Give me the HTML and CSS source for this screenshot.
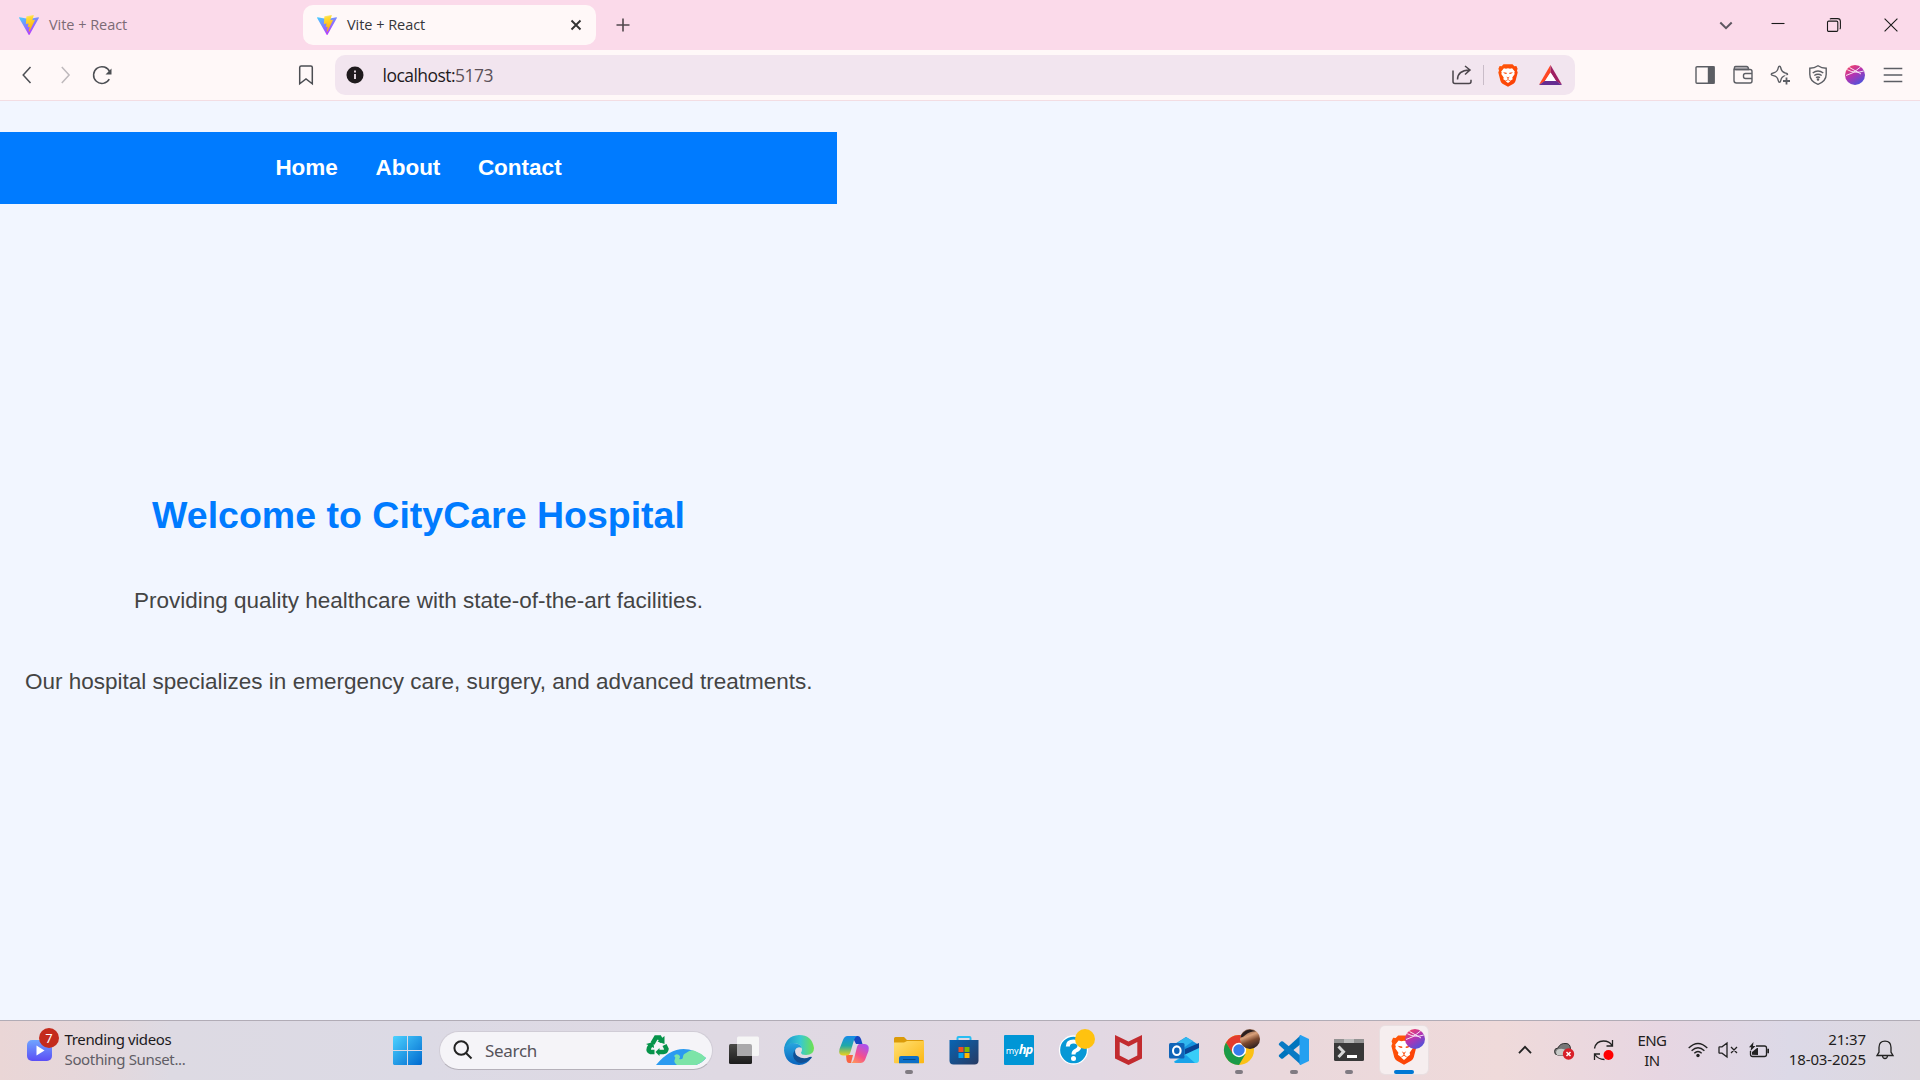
FILE: index.html
```html
<!DOCTYPE html>
<html lang="en">
<head>
<meta charset="utf-8">
<title>Vite + React</title>
<link rel="stylesheet" href="styles.css">
</head>
<body>
<svg class="sprite" aria-hidden="true">
  <defs>
    <linearGradient id="viteBody" x1="0" y1="0" x2=".6" y2="1"><stop offset="0" stop-color="#41d1ff"/><stop offset="1" stop-color="#bd34fe"/></linearGradient>
    <linearGradient id="viteBolt" x1=".4" y1="0" x2=".55" y2="1"><stop offset="0" stop-color="#ffea83"/><stop offset=".15" stop-color="#ffdd35"/><stop offset="1" stop-color="#ffa800"/></linearGradient>
    <linearGradient id="orb" x1=".15" y1="0" x2=".8" y2="1"><stop offset="0" stop-color="#f6425f"/><stop offset=".45" stop-color="#b633b0"/><stop offset="1" stop-color="#4256e0"/></linearGradient>
    <linearGradient id="braveFill" x1="0" y1="0" x2="1" y2="1"><stop offset="0" stop-color="#ff5a0a"/><stop offset="1" stop-color="#fb3b05"/></linearGradient>
    <symbol id="vite" viewBox="0 0 256 257">
      <path fill="url(#viteBody)" d="M255.153 37.938L134.897 252.976c-2.483 4.44-8.862 4.466-11.382.048L.875 37.958c-2.746-4.814 1.371-10.646 6.827-9.67l120.385 21.517a6.537 6.537 0 0 0 2.322-.004l117.867-21.483c5.438-.991 9.574 4.796 6.877 9.62Z"/>
      <path fill="url(#viteBolt)" d="M185.432.063L96.44 17.501a3.268 3.268 0 0 0-2.634 3.014l-5.474 92.456a3.268 3.268 0 0 0 3.997 3.378l24.777-5.718c2.318-.535 4.413 1.507 3.936 3.838l-7.361 36.047c-.495 2.426 1.782 4.5 4.151 3.78l15.304-4.649c2.372-.72 4.652 1.36 4.15 3.788l-11.698 56.621c-.732 3.542 3.979 5.473 5.943 2.437l1.313-2.028l72.516-144.72c1.215-2.423-.88-5.186-3.54-4.672l-25.505 4.922c-2.396.462-4.435-1.77-3.759-4.114l16.646-57.705c.677-2.35-1.37-4.583-3.769-4.113Z"/>
    </symbol>
    <symbol id="brave" viewBox="0 0 20 23">
      <path fill="url(#braveFill)" d="M5.5.3h9l1.9 2 2-.3 1.200 2.800-.6 1.700.7 2-2.200 8.600q-.5 1.700-2 2.700L10 22.800l-5.500-3q-1.500-1-2-2.700L.3 8.500l.7-2L.4 4.800 1.600 2l2 .3z"/>
      <path fill="#fff" d="M5.900 4.200 8 4.700l2-.4 2 .4 2.100-.5 2.700 3.300-.5 1.300.4 1.300-2.400 3.500.4 1.600-2.400 1.600-1.100-.8L10 15.200l-1.200.8-1.100.8-2.400-1.600.4-1.600L3.300 10.100l.4-1.300-.5-1.300z"/>
      <path fill="#fff" d="M10 15.900 12.300 17.300 10 19.100 7.700 17.300z"/>
      <path fill="#fb4a0b" d="M5 8.300 8.600 8.800 8.700 10 6.900 9.800zM15 8.300 11.400 8.800 11.300 10 13.100 9.800zM8.300 12.400 10 13.600 11.700 12.400 10.500 14.300v.9h-1v-.9z"/>
    </symbol>
    <symbol id="planet" viewBox="0 0 20 20">
      <circle cx="10" cy="10" r="10" fill="url(#orb)"/>
      <path fill="none" stroke="#fff" stroke-opacity=".85" stroke-width="1" d="M2.300 4.700Q10 9 18.800 6M1 10.500Q9 8.500 15.500 2M4.500 2.500 16 9"/>
    </symbol>
  </defs>
</svg>

<header class="browser">
  <div class="tabstrip">
    <div class="tab"><svg class="favicon"><use href="#vite"/></svg><span>Vite + React</span></div>
    <div class="tab tab-active"><svg class="favicon"><use href="#vite"/></svg><span>Vite + React</span>
      <svg class="tab-close" viewBox="0 0 12 12"><path d="M1.500 1.500l9 9M10.500 1.500l-9 9"/></svg></div>
    <svg class="new-tab" viewBox="0 0 14 14"><path d="M7 .5v13M.5 7h13"/></svg>
    <div class="window-controls">
      <svg class="win chevron" viewBox="0 0 14 14"><path d="M1.300 4.500 7 10.200l5.700-5.700"/></svg>
      <svg class="win" viewBox="0 0 14 14"><path d="M.5 5.500h13"/></svg>
      <svg class="win" viewBox="0 0 14 14"><rect x=".5" y="3.100" width="10.300" height="10.300" rx="1.200"/><path d="M3 1.200Q3.300.6 4.200.6h6.400q2.800 0 2.800 2.800v6.400q0 1-.7 1.300"/></svg>
      <svg class="win" viewBox="0 0 14 14"><path d="M.6.6l12.800 12.800M13.400.6.6 13.400"/></svg>
    </div>
  </div>
  <div class="toolbar">
    <div class="nav-buttons">
      <svg viewBox="0 0 20 20"><path d="M13.500 2 6.200 10l7.300 8"/></svg>
      <svg class="dim" viewBox="0 0 20 20"><path d="M6.800 2l7.300 8-7.300 8"/></svg>
      <svg viewBox="0 0 20 20"><path d="M17.300 14.200A8.400 8.400 0 1 1 17.800 7"/><path fill="#4c4e53" stroke="none" d="M19.500 3.500v6h-6z"/></svg>
    </div>
    <svg class="bookmark" viewBox="0 0 20 20"><path d="M3.700 2.500q0-1.500 1.500-1.500h9.600q1.500 0 1.500 1.500v16.300L10 14l-6.300 4.800z"/></svg>
    <div class="address">
      <svg class="info" viewBox="0 0 18 18"><circle cx="9" cy="9" r="8.500" fill="#1f1a1d"/><path stroke="#f2e5ef" stroke-width="1.800" d="M9 8v5M9 4.500v2"/></svg>
      <span class="url">localhost:<span class="port">5173</span></span>
      <div class="address-actions">
        <svg class="share" viewBox="0 0 20 20"><path d="M1 5.500v11q0 2 2 2h14q2 0 2-2v-1.800M5.500 14.500q0-9 12-9.500M13 1l5 4-5 4.500"/></svg>
        <i class="divider"></i>
        <svg class="lion"><use href="#brave"/></svg>
        <svg class="bat" viewBox="0 0 23 20"><path fill="#ff4724" d="M11.500 0v7.500L5.700 16.500 0 19.800z"/><path fill="#9e1f63" d="M11.500 0 23 19.800l-5.700-3.300-5.800-9z"/><path fill="#662d91" d="M0 20l5.700-4h11.600l5.700 4z"/><path fill="#fff" d="M11.500 7.500 17 16H6z"/></svg>
      </div>
    </div>
    <div class="extensions">
      <svg viewBox="0 0 20 20"><rect x="1" y="1.700" width="18" height="16.600" rx="1"/><path fill="#5c5e64" d="M13.500 2H19v16h-5.500z"/></svg>
      <svg viewBox="0 0 20 20"><path fill="#c9c4c8" d="M1.500 2.500q0-1 1-1h11q2 0 2 3h-14z"/><path d="M1 3.500v12q0 2.500 2.500 2.500H17q2 0 2-2V6.500q0-2-2-2H2.500M19 8.500h-6.500q-2 0-2 2v1q0 2 2 2H19"/></svg>
      <svg viewBox="0 0 20 20"><path d="M9.500 1.200Q10.500 1.200 10.800 3q.8 4 4.500 5 2.300.4 2.300 1.300t-2.300 1.300q-3.700.8-4.500 4.700-.4 2-1.300 2t-1.300-2q-.8-4-4.900-4.700-2.100-.4-2.100-1.300t2.100-1.300q4.200-1 4.900-5 .4-1.800 1.300-1.800z"/><path fill="#fff8f8" stroke="#fff8f8" d="M15.500 11h4v8h-5z"/><path stroke-width="1.800" d="M16.500 12.500v7M13 16h7"/></svg>
      <svg viewBox="0 0 20 20"><path d="M10 .8q3.500 2.500 8.200 2.500v6q0 7-8.200 10-8.200-3-8.200-10v-6Q6.500 3.300 10 .8z"/><path d="M4.700 8q5.300-4 10.600 0M6.300 10.500q3.700-2.600 7.400 0M8 12.700q2-1.300 4 0"/><circle cx="10" cy="14.500" r=".6"/></svg>
      <svg><use href="#planet"/></svg>
      <svg viewBox="0 0 20 20"><path d="M.7 3.500h18.600M.7 10h18.600M.7 16.500h18.600"/></svg>
    </div>
  </div>
</header>

<main class="page">
  <nav class="site-nav"><a>Home</a><a>About</a><a>Contact</a></nav>
  <section class="hero">
    <h1>Welcome to CityCare Hospital</h1>
    <p>Providing quality healthcare with state-of-the-art facilities.</p>
    <p>Our hospital specializes in emergency care, surgery, and advanced treatments.</p>
  </section>
</main>

<footer class="taskbar">
  <div class="widget">
    <div class="widget-icon">
      <svg viewBox="0 0 25 21"><defs><linearGradient id="vid" x1="0" y1="0" x2="0" y2="1"><stop stop-color="#6fa5ff"/><stop offset="1" stop-color="#5b4ef5"/></linearGradient></defs><rect width="25" height="21" rx="5" fill="url(#vid)"/><path fill="#fff" d="M9.500 5.500v10l8-5z"/></svg>
      <span class="count">7</span>
    </div>
    <div class="widget-text"><span class="w1">Trending videos</span><span class="w2">Soothing Sunset...</span></div>
  </div>

  <div class="start"><svg viewBox="0 0 29 29"><defs><linearGradient id="win" x1="0" y1="0" x2="1" y2="1"><stop stop-color="#4cd2ff"/><stop offset="1" stop-color="#0069cf"/></linearGradient></defs><path fill="url(#win)" d="M1 0h13v14H0V1zM15 0h13l1 1v13H15zM0 15h14v14H1l-1-1zM15 15h14v13l-1 1H15z"/></svg></div>

  <div class="search">
    <svg class="glass" viewBox="0 0 20 20"><circle cx="8.200" cy="8" r="6.800"/><path d="M13 13l5.500 5.500"/></svg>
    <span>Search</span>
    <svg class="earth" viewBox="0 0 60 34">
      <g fill="none" stroke="#06934a" stroke-width="4.500"><path d="M6.500 10.500 10 4.500h3.500L16 9M18.500 12l2 4q-.5 3-3 3H13M8.500 19H4.500q-2.500-1-1.500-4l2-3.500"/></g>
      <path fill="#06934a" d="M18.500 3v8l-7-2.500zM13.500 15v8L9.500 19zM0 11l7.500-2 .5 6z"/>
      <path fill="#2b9bf0" d="M10 32Q33 4 60 25q-4 5-10 7z"/>
      <path fill="#7ce4a8" d="M40 20q5-4 9-2 6 2 11 7-4 5-10 7H31q-4-3-2-6 1-2-1-3 2-3 5-1 2 2 0 4 4 1 4-2 0-3 3-4z"/>
    </svg>
  </div>

  <div class="apps">
    <div class="app"><svg viewBox="0 0 30 30"><defs><linearGradient id="tv" x1="0" y1="0" x2="0" y2="1"><stop stop-color="#4a4a48"/><stop offset="1" stop-color="#1c1c1c"/></linearGradient></defs><rect y="9" width="23" height="20" rx="1.500" fill="url(#tv)"/><rect x="8" y="1.500" width="22" height="19.500" rx="1.500" fill="#f6f6f6"/><path fill="#aaa9ab" d="M8 9h13q2 0 2 2v10H9.500q-1.500 0-1.500-1.500z"/></svg></div>
    <div class="app"><svg viewBox="0 0 30 30"><defs><linearGradient id="e1"><stop stop-color="#168fd0"/><stop offset=".55" stop-color="#38c9d0"/><stop offset="1" stop-color="#70e24c"/></linearGradient><linearGradient id="e2" x1="0" y1="0" x2="0" y2="1"><stop stop-color="#28a5df"/><stop offset="1" stop-color="#0863bd"/></linearGradient></defs><path fill="url(#e2)" d="M0 15Q1 7 9 8q7 0 9 5-5-2-7 2 0 9 8 10 5 0 9-3-5 8-13 8Q1 29 0 15z"/><path fill="#104f94" d="M11.500 14Q6 22 13 27q7 3 14.500-4 1-2-2-1-6 3-12-1-4-3-2-7z"/><path fill="url(#e1)" d="M0 15Q1 1 15 0q13 0 15 13 0 7-8 7-5 0-5-2.500 1-1 1-3Q17 8 9.500 8 2 8.500 0 15z"/></svg></div>
    <div class="app"><svg viewBox="0 0 30 30"><defs><linearGradient id="c1" x1="0" y1="0" x2="0" y2="1"><stop stop-color="#178bea"/><stop offset=".5" stop-color="#20a9a6"/><stop offset="1" stop-color="#efd21a"/></linearGradient><linearGradient id="c2" x1="0" y1="1" x2=".6" y2="0"><stop stop-color="#ffa055"/><stop offset=".5" stop-color="#f5508c"/><stop offset="1" stop-color="#b052e8"/></linearGradient></defs><path fill="#1747c2" d="M13 1h6q2 0 3 3l1.500 5H17z"/><path fill="#f96443" d="M7 20h7l-2 8H10q-2 0-2.500-3z"/><path fill="url(#c1)" d="M8.500 1H18q-2 1-3 4l-3.500 12q-1 3.500-4.500 3.500H4Q-1 20 .5 14L4 5q1.500-4 4.500-4z"/><path fill="url(#c2)" d="M18.500 9H26q5 1 3.500 7L26 25q-1.500 3-4.500 3H12q2-1 3-4l3-12q.5-2 2-3z"/></svg></div>
    <div class="app running"><svg viewBox="0 0 30 30"><defs><linearGradient id="fo" x1="0" y1="0" x2="1" y2="1"><stop stop-color="#ffe074"/><stop offset="1" stop-color="#fcb712"/></linearGradient></defs><path fill="#db9b09" d="M0 3.500Q0 2 1.500 2H10l3 3h15.500Q30 5 30 6.500V12H0z"/><path fill="url(#fo)" d="M0 7.500h10L13 6h17v21.500q0 .8-1 .8H1q-1 0-1-1z"/><path fill="#0d6fc7" d="M5 28.200V23q0-2 2-2h16q2 0 2 2v5.200z"/><path stroke="#074b86" stroke-width="1" d="M9 24.500h12.500"/></svg></div>
    <div class="app"><svg viewBox="0 0 30 30"><defs><linearGradient id="st" x1="0" y1="0" x2="1" y2="1"><stop stop-color="#0865b4"/><stop offset="1" stop-color="#273a63"/></linearGradient></defs><path fill="none" stroke="#29bdf2" stroke-width="2" d="M8.500 7V3q0-1 1-1h11q1 0 1 1v4"/><path fill="url(#st)" d="M.5 5h29v20.500q0 4-4 4h-21q-4 0-4-4z"/><path fill="#f25022" d="M9.500 12h5v5h-5z"/><path fill="#7fba00" d="M15.500 12h5v5h-5z"/><path fill="#00a4ef" d="M9.500 18h5v5h-5z"/><path fill="#ffb900" d="M15.500 18h5v5h-5z"/></svg></div>
    <div class="app"><div class="myhp"><span>my</span><b>hp</b></div></div>
    <div class="app"><svg viewBox="0 0 30 30"><circle cx="14.500" cy="15" r="14" fill="#0798d6" stroke="#fff" stroke-width="1.300"/><path fill="none" stroke="#fff" stroke-width="4" d="M8.800 11.500q0-5 5.700-5 6 0 6 4.500 0 3-3.500 4.500-2.500 1-2.500 4"/><circle cx="14.500" cy="23.500" r="2.500" fill="#fff"/></svg><i class="dot-badge"></i></div>
    <div class="app"><svg viewBox="0 0 30 30"><path fill="#c22b2f" d="M1 0l13.500 6.500L28 0v23.500L14.500 30 1 23.500zM5.700 7v13.500l8.800 4.500 8.800-4.500V7l-8.800 4.500z"/></svg></div>
    <div class="app"><svg viewBox="0 0 30 30"><path fill="#1694df" d="M4 10 17 2l13 8v4L14 22 4 16z"/><path fill="#32b8ef" d="M11 6l6-4 7 4-11 8-5-5z"/><path fill="#0a4494" d="M30 8v6L16 21V14z"/><path fill="#38cdf8" d="M30 13v12q0 3-3 3H8q-2 0-3-1.500L15 20z"/><path fill="#19a3e9" d="M5 27l12-7 9 8H8q-2 0-3-1z"/><rect y="8" width="15.500" height="15.500" rx="1.500" fill="#0f64b8"/><ellipse cx="7.800" cy="15.700" rx="3.800" ry="4.300" fill="none" stroke="#fff" stroke-width="2.100"/></svg></div>
    <div class="app running"><svg viewBox="0 0 30 30"><circle cx="15" cy="15" r="15" fill="#fbc116"/><path fill="#e33b2e" d="M2 7.500A15 15 0 0 1 28 7.500L27.500 9H15L8.500 19z"/><path fill="#1b9a48" d="M2 7.500A15 15 0 0 0 15 30l6.500-11H9z"/><circle cx="15" cy="15" r="7.200" fill="#fff"/><circle cx="15" cy="15" r="5.700" fill="#367cec"/></svg>
      <svg class="avatar" viewBox="0 0 20 20"><defs><linearGradient id="av" x1=".3" y1="0" x2=".7" y2="1"><stop stop-color="#6d4a38"/><stop offset=".35" stop-color="#d9a07a"/><stop offset=".6" stop-color="#7d4a30"/><stop offset="1" stop-color="#211a1e"/></linearGradient></defs><circle cx="10" cy="10" r="10" fill="url(#av)"/><path fill="#2b1f1e" d="M1.500 5.500Q7-2 16 2.300 9 2.500 6 5.500t-5.500 3z"/></svg></div>
    <div class="app running"><svg viewBox="0 0 30 30"><path fill="#0074bd" d="M22 0 0 20q-.5 1 0 1.500l2 2q1 .5 2 0L23 8z"/><path fill="#087ac4" d="M22 30 0 10q-.5-1 0-1.500l2-2q1-.5 2 0L23 22z"/><path fill="#25a0f0" d="M21.500 0 30 4v22l-8.500 4q-1 0-1-1V1q0-1 1-1z"/></svg></div>
    <div class="app running"><svg viewBox="0 0 30 30"><rect y="4" width="30" height="22" rx="1.500" fill="#383838"/><path fill="#929292" d="M1 4h9v4H0V5zM20 4h9l1 1v3H20z"/><path fill="#bbb" d="M10 4h10v4H10z"/><path fill="none" stroke="#d6d6d6" stroke-width="3" d="M4.500 11.500 9.500 16.700 4.500 22"/><path stroke="#fff" stroke-width="3" d="M13 21.500h10"/></svg></div>
    <div class="app running current"><svg class="brave-app"><use href="#brave"/></svg><svg class="avatar"><use href="#planet"/></svg></div>
  </div>

  <div class="tray">
    <svg class="t-up" viewBox="0 0 14 10"><path d="M1 8.200 7 1.800l6 6.400"/></svg>
    <svg class="t-cloud" viewBox="0 0 20 18"><path fill="#777" stroke="#333" stroke-width="1" d="M4 13Q.5 13 .5 9.500T4 6q2-5 8-4.500 4.500 0 4.500 6L12 13z"/><path fill="#c8cac8" stroke="none" d="M3 13Q1 10 3.500 7.500q5-2 9 1v4.500z"/><circle cx="14.500" cy="12" r="5.700" fill="#d82029" stroke="none"/><path stroke="#fff" stroke-width="1.500" d="M12.500 10l4 4M16.500 10l-4 4"/></svg>
    <svg class="t-sync" viewBox="0 0 22 22"><path stroke-width="1.300" d="M1.500 9.500Q3 2 10.500 2q6 0 8.500 4.500M19.500 1v6h-6M7 15H1.500v6M1.500 15q3.500 5.500 10 5.500"/><circle cx="15.500" cy="16" r="5" fill="#f00" stroke="none"/></svg>
    <div class="lang"><span>ENG</span><span>IN</span></div>
    <svg class="t-wifi" viewBox="0 0 20 16"><path d="M.7 6Q10-3 19.300 6M3.600 8.700q6.400-6 12.800 0M6.300 11.300q3.700-3.500 7.400 0"/><circle cx="10" cy="13.500" r="1.700" fill="#222" stroke="none"/></svg>
    <svg class="t-vol" viewBox="0 0 20 16"><path d="M1 5.500q0-.7.7-.7H4L9 1v14l-5-3.800H1.700q-.7 0-.7-.7zM13 5l6 6M19 5l-6 6"/></svg>
    <svg class="t-bat" viewBox="0 0 20 16"><path d="M7 4h8.500q2 0 2 2v6.500q0 2-2 2h-12q-2 0-2-2V9"/><path fill="#222" stroke="none" d="M18.300 6.800H20v4.500h-1.700zM3 12.800V10l5-4h1v7zM4.500 0 0 5.200h2.200L1.500 9 6.500 4H4z"/></svg>
    <div class="clock"><span>21:37</span><span>18-03-2025</span></div>
    <svg class="t-bell" viewBox="0 0 18 20"><path d="M9 1.200q6 0 6 6.300v4.700l2 3.300H1l2-3.300V7.500q0-6.300 6-6.300zM6.500 16q.3 2.500 2.500 2.500t2.500-2.500"/></svg>
  </div>
</footer>
</body>
</html>
```

FILE: styles.css
```css
* { box-sizing: border-box; }
body {
  margin: 0;
  width: 1920px;
  height: 1080px;
  display: flex;
  flex-direction: column;
  overflow: hidden;
  font-family: "Noto Sans", "Open Sans", sans-serif;
  background: #f2f6ff;
}
svg { display: block; flex: none; overflow: visible; }
.sprite { position: absolute; width: 0; height: 0; }

/* Browser frame */
.tabstrip {
  height: 50px;
  display: flex;
  align-items: center;
  padding-left: 5px;
  background: #fbdaea;
}
.tab {
  width: 298px;
  height: 40px;
  display: flex;
  align-items: center;
  padding: 0 14px;
  font-family: "Open Sans", sans-serif;
  font-size: 14.5px;
  letter-spacing: -0.04px;
  color: #7b6b75;
}
.tab span { padding-bottom: 1px; }
.tab-active { width: 293px; background: #fff8f8; border-radius: 10px; color: #35363a; }
.favicon { width: 20px; height: 20px; margin-right: 10px; }
.tab-close { width: 12px; height: 12px; margin-left: auto; stroke: #333; stroke-width: 1.9; }
.new-tab { width: 14px; height: 14px; margin-left: 20px; stroke: #51474d; stroke-width: 1.6; }
.window-controls { display: flex; margin-left: auto; padding-right: 22px; }
.win { width: 14px; height: 14px; margin-left: 44px; fill: none; stroke: #1a1a1a; stroke-width: 1.1; }
.win.chevron { stroke: #5d5660; stroke-width: 2; margin-right: -6px; }
.win:nth-child(3) { margin-left: 42px; }
.win:nth-child(4) { margin-left: 43px; }
.toolbar {
  height: 51px;
  display: flex;
  align-items: center;
  background: #fff8f8;
  border-bottom: 1px solid #f3dde3;
}
.nav-buttons { display: flex; gap: 17.5px; padding-left: 17px; width: 296px; }
.nav-buttons svg, .bookmark { width: 20px; height: 20px; fill: none; stroke: #4c4e53; stroke-width: 1.5; }
.nav-buttons .dim { stroke: #beb9bc; }
.address {
  width: 1240px;
  height: 40px;
  margin-left: 19px;
  display: flex;
  align-items: center;
  padding-left: 11px;
  border-radius: 10px;
  background: #f2e5ef;
}
.info { width: 18px; height: 18px; }
.url {
  margin-left: 18.5px;
  padding-bottom: 1px;
  font-family: "Open Sans", sans-serif;
  font-size: 17.5px;
  letter-spacing: -0.53px;
  line-height: 24px;
  color: #1f1a1d;
}
.port { color: #5c5159; }
.address-actions { display: flex; align-items: center; margin-left: auto; padding-right: 13px; }
.share { width: 20px; height: 20px; fill: none; stroke: #4b454b; stroke-width: 1.5; }
.divider { width: 1px; height: 20px; background: #c9bcc8; margin: 0 14px 0 11px; }
.lion { width: 20px; height: 23px; }
.bat { width: 23px; height: 20px; margin-left: 21px; }
.extensions { display: flex; gap: 17.5px; margin-left: auto; padding-right: 17.5px; }
.extensions svg { width: 20px; height: 20px; fill: none; stroke: #5c5e64; stroke-width: 1.4; }
.extensions svg:nth-child(5) { stroke: none; }

/* Hospital site */
.page {
  flex: 1;
  width: 837px;
  padding-top: 31px;
  font-family: "Liberation Sans", Arial, sans-serif;
  font-size: 22.5px;
  text-align: center;
}
.site-nav {
  height: 72px;
  display: flex;
  justify-content: center;
  align-items: center;
  gap: 37.5px;
  background: #007bff;
  color: #fff;
  font-weight: bold;
}
.hero { padding: 289px 25px 0; }
.hero h1 { margin: 0; font-size: 37.5px; line-height: 44px; color: #007bff; }
.hero p { margin: 48px 0 0; line-height: 31px; color: #444; white-space: nowrap; }
.hero p + p { margin-top: 50px; }

/* Taskbar */
.taskbar {
  height: 60px;
  display: flex;
  align-items: center;
  padding-bottom: 1px;
  border-top: 1px solid #b1acb6;
  background: linear-gradient(90deg, #ead6d6 0, #e5d7db 90px, #dddae3 170px, #dcdae5 420px, #dfd9e3 720px, #e2d8e3 1100px, #ead8dc 1280px, #efdada 1500px, #e7d6e2 1660px, #dcd9e7 1790px, #ddd8df 1920px);
}
.widget { width: 380px; display: flex; align-items: center; padding-left: 27px; }
.widget-icon { position: relative; width: 25px; height: 21px; }
.widget-icon svg { width: 25px; height: 21px; }
.count {
  position: absolute;
  left: 12px;
  top: -12px;
  width: 20px;
  height: 20px;
  border-radius: 50%;
  background: #c42b1c;
  color: #fff;
  font-size: 13px;
  line-height: 20px;
  text-align: center;
}
.widget-text { margin: -2px 0 0 12.5px; display: flex; flex-direction: column; font-size: 15px; line-height: 20px; }
.w1 { color: #1b1a1d; letter-spacing: -0.35px; }
.w2 { color: #605d65; letter-spacing: -0.35px; }
.start { width: 59px; padding-left: 13px; }
.start svg { width: 29px; height: 29px; }
.search {
  width: 274px;
  height: 39px;
  display: flex;
  align-items: center;
  padding: 0 6px 0 13px;
  background: #f5f4f8;
  border: 1px solid #d0ccd6;
  border-bottom-color: #b5b1ba;
  border-radius: 20px;
  font-size: 17px;
  letter-spacing: -0.3px;
  color: #55535a;
}
.glass { width: 20px; height: 20px; margin-right: 12px; fill: none; stroke: #222; stroke-width: 2; }
.earth { width: 60px; height: 34px; margin-left: auto; }
.apps { display: flex; margin-left: 4px; gap: 7px; }
.app {
  position: relative;
  width: 48px;
  height: 48px;
  display: flex;
  align-items: center;
  justify-content: center;
}
.app:first-child { margin-left: 3px; }
.app > svg { width: 30px; height: 30px; }
.app.running::after {
  content: "";
  position: absolute;
  bottom: 0;
  left: 20px;
  width: 8px;
  height: 4px;
  border-radius: 2px;
  background: #807b82;
}
.app.current { background: #f6eeef; border-radius: 5px; box-shadow: 0 0 0 1px #e9dfe1; }
.app.current::after { left: 14px; width: 20px; background: #0078d4; }
.app > .brave-app { width: 26px; height: 30px; }
.app > .avatar { position: absolute; right: 3px; top: 3px; width: 20px; height: 20px; }
.dot-badge { position: absolute; right: 3px; top: 3px; width: 20px; height: 20px; border-radius: 50%; background: #ffc20f; }
.myhp {
  width: 30px;
  height: 30px;
  background: #0096d6;
  color: #fff;
  border-radius: 1px;
  display: flex;
  justify-content: center;
  align-items: baseline;
  font-size: 9px;
  line-height: 29px;
}
.myhp b { font-size: 13px; font-style: italic; letter-spacing: -1px; }

.tray { display: flex; align-items: center; margin-left: auto; padding-right: 26px; color: #1f1d20; }
.tray svg { fill: none; stroke: #222; stroke-width: 1.3; }
.tray .t-up { width: 14px; height: 10px; stroke-width: 1.8; }
.t-cloud { width: 20px; height: 18px; margin: 2px 0 0 22px; }
.t-sync { width: 22px; height: 22px; margin-left: 19px; }
.lang, .clock { display: flex; flex-direction: column; font-size: 15px; line-height: 20px; }
.lang { width: 32px; margin-left: 21px; align-items: center; letter-spacing: -0.6px; }
.t-wifi { width: 20px; height: 16px; margin-left: 20px; }
.t-vol { width: 20px; height: 16px; margin-left: 10px; }
.t-bat { width: 20px; height: 16px; margin-left: 11px; }
.clock { width: 78px; margin: -2px 0 0 19px; align-items: flex-end; letter-spacing: -0.1px; white-space: nowrap; }
.t-bell { width: 18px; height: 20px; margin-left: 10px; }
```
